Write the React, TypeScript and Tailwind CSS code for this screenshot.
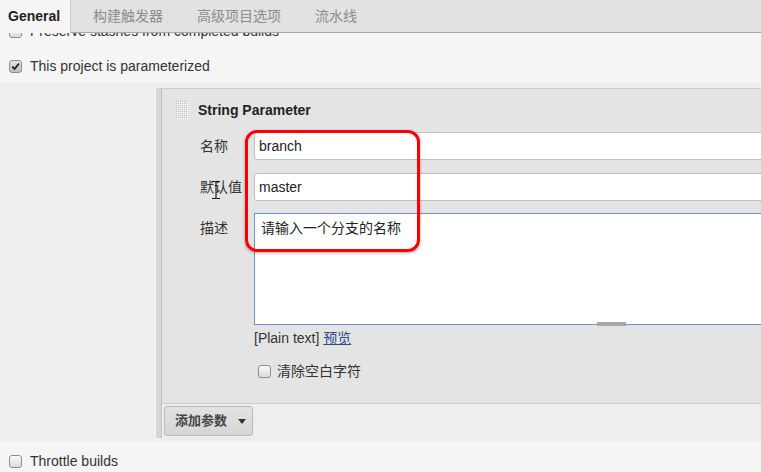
import React from "react";

function Box({ checked }: { checked?: boolean }) {
  return (
    <span
      className={
        "inline-flex w-[13px] h-[13px] shrink-0 items-center justify-center rounded-[3px] border border-[#8e8e8e] bg-gradient-to-b " +
        (checked ? "from-[#e4e4e4] to-[#bdbdbd]" : "from-[#fbfbfb] to-[#dadada]")
      }
    >
      {checked && (
        <svg width="9" height="9" viewBox="0 0 9 9">
          <path d="M1.2 4.6 L3.6 7 L7.9 1.6" stroke="#1e1e1e" strokeWidth="1.8" fill="none" />
        </svg>
      )}
    </span>
  );
}

function Grip() {
  const dots: React.ReactElement[] = [];
  for (let y = 0; y < 9; y++) {
    for (let x = 0; x < 6; x++) {
      dots.push(<rect key={x + "-" + y} x={x * 2} y={y * 2} width="1.2" height="1.2" fill="#bdbdbd" />);
    }
  }
  return (
    <svg width="12" height="18" viewBox="0 0 12 18" className="shrink-0">
      <rect width="12" height="18" fill="#f6f6f6" />
      {dots}
    </svg>
  );
}

export default function App() {
  return (
    <div className="relative w-[761px] h-[472px] overflow-hidden bg-[#f5f5f5] text-[14px] text-[#333] font-['Liberation_Sans','Noto_Sans_CJK_SC',sans-serif]">
      {/* Tab bar */}
      <div className="relative z-10 flex h-[33px] bg-[#e2e2e2] border-b border-[#a9a9a9]">
        <div className="flex h-[33px] w-[71px] items-center border-r border-[#c9c9c9] bg-[#f5f5f5] pl-[8px] font-bold text-[#222]">
          General
        </div>
        <div className="flex items-center text-[#8c8c8c]">
          <span className="ml-[22px]">构建触发器</span>
          <span className="ml-[34px]">高级项目选项</span>
          <span className="ml-[34px]">流水线</span>
        </div>
      </div>

      {/* Content */}
      <div className="-mt-[18px]">
        <div className="flex h-[35px] items-center gap-[8px] pb-[3px] pl-[9px]">
          <Box />
          <span>Preserve stashes from completed builds</span>
        </div>
        <div className="flex h-[32px] items-center gap-[8px] pl-[9px]">
          <Box checked />
          <span>This project is parameterized</span>
        </div>

        <div className="flex h-[359px] bg-[#eeeeee] pt-[6px]">
          <div className="w-[155px] shrink-0" />
          <div className="h-[350px] w-[7px] shrink-0 border-l border-r border-l-[#f7f7f7] border-r-[#c4c4c4] bg-[#d5d5d5]" />
          <div className="min-w-0 flex-1">
            {/* Repeated chunk panel */}
            <div className="h-[316px] border-y border-[#cdcdcd] bg-[#e4e4e4] pt-[11px]">
              <div className="flex h-[20px] items-center gap-[10px] pl-[14px]">
                <Grip />
                <span className="font-bold text-[#222]">String Parameter</span>
              </div>

              <div className="mt-[12px] flex pl-[38px]">
                <div className="flex h-[28px] w-[54px] shrink-0 items-center">名称</div>
                <div className="flex h-[28px] w-[714px] shrink-0 items-center rounded-[3px] border border-[#c0c0c0] bg-white pl-[4px] text-[#222]">
                  branch
                </div>
              </div>

              <div className="mt-[13px] flex pl-[38px]">
                <div className="flex h-[28px] w-[54px] shrink-0 items-center">默认值</div>
                <div className="flex h-[28px] w-[714px] shrink-0 items-center rounded-[3px] border border-[#c0c0c0] bg-white pl-[4px] text-[#222]">
                  master
                </div>
              </div>

              <div className="mt-[12px] flex pl-[38px]">
                <div className="w-[54px] shrink-0 pt-[5px] leading-[20px]">描述</div>
                <div className="shrink-0">
                  <div className="h-[112px] w-[714px] border border-[#6b91d3] bg-white pl-[6px] pt-[4px] leading-[20px] text-[#222]">
                    请输入一个分支的名称
                  </div>
                  <div className="-mt-[3px] flex h-[4px] w-[714px] justify-center">
                    <div className="h-[4px] w-[29px] bg-[#a8a8a8]" />
                  </div>
                </div>
              </div>

              <div className="mt-[2px] h-[20px] pl-[92px] leading-[20px]">
                [Plain text] <span className="text-[#2a4c86] underline">预览</span>
              </div>

              <div className="mt-[13px] flex h-[20px] items-center gap-[6px] pl-[96px]">
                <Box />
                <span>清除空白字符</span>
              </div>
            </div>

            {/* Add parameter button */}
            <div className="ml-[2px] mt-[2px] flex h-[30px] w-[89px] items-center rounded-[3px] border border-[#bababa] bg-gradient-to-b from-[#e2e2e2] to-[#d6d6d6] pl-[10px] text-[13px] font-bold text-[#444]">
              <span>添加参数</span>
              <svg width="8" height="5" viewBox="0 0 8 5" className="ml-[11px]">
                <path d="M0 0 H8 L4 5 Z" fill="#333" />
              </svg>
            </div>
          </div>
        </div>

        <div className="flex h-[40px] items-center gap-[8px] pl-[9px]">
          <Box />
          <span>Throttle builds</span>
        </div>
      </div>

      {/* Red annotation */}
      <div className="pointer-events-none absolute left-[245px] top-[130px] h-[122px] w-[175px] rounded-[12px] border-[3px] border-[#ff0000] shadow-[0_1px_3px_rgba(0,0,0,0.35)]" />

      {/* Mouse I-beam cursor */}
      <svg className="pointer-events-none absolute left-[210px] top-[180px]" width="12" height="20" viewBox="0 0 12 20">
        <path d="M2 1.5 H5 Q6 1.5 6 3 V17 Q6 18.5 5 18.5 H2 M10 1.5 H7 Q6 1.5 6 3 M6 17 Q6 18.5 7 18.5 H10" stroke="#111" strokeWidth="1.1" fill="none" />
      </svg>
    </div>
  );
}
